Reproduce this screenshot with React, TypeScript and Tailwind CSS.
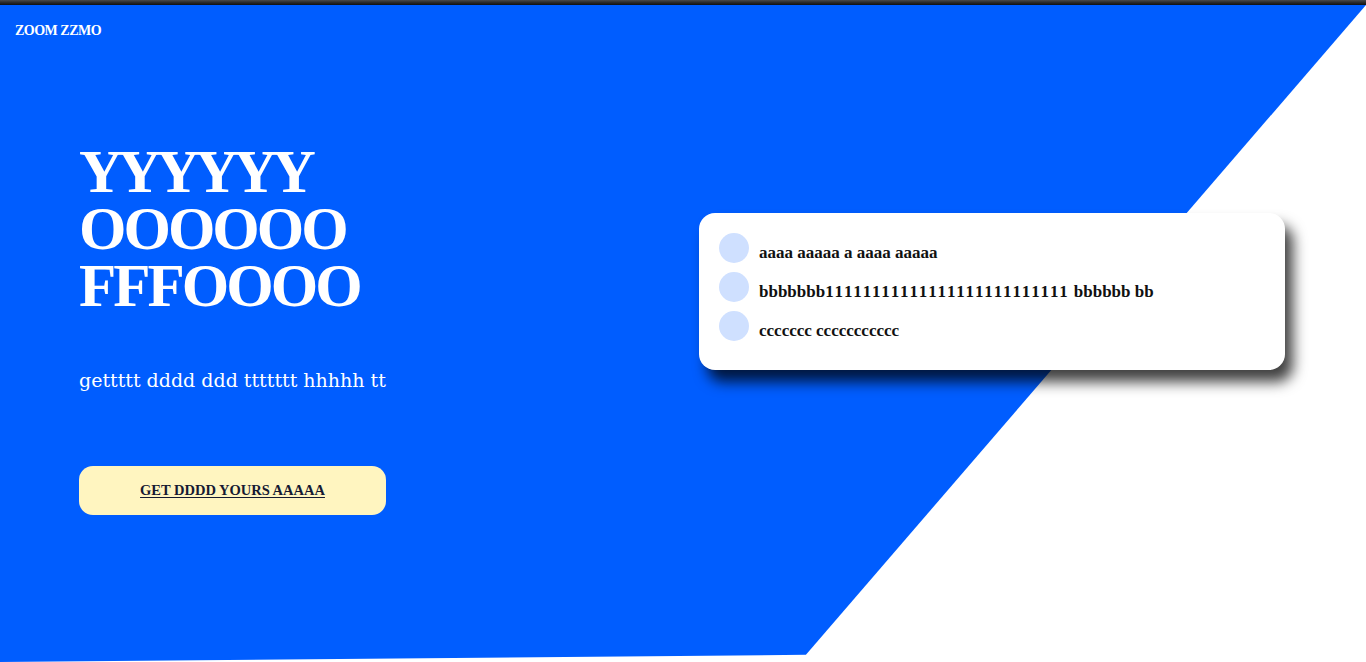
import React from 'react';

const App = () => {
  return (
    <div className="h-[662px] overflow-hidden bg-white font-['Liberation_Serif',serif]">
      {/* top strip */}
      <div className="h-[5px] bg-gradient-to-b from-[#4a4a4a] via-[#2a2a2a] to-[#111111]" />

      <section className="relative h-[657px]">
        {/* slanted blue backdrop */}
        <div className="absolute inset-0 bg-[#005dff] [clip-path:polygon(0_0,100%_0,59%_98.9%,0_100%)]" />

        <div className="relative">
          <header className="pt-[16px] pl-[15px] text-[14px] leading-5 font-bold tracking-[-0.5px] text-white">
            ZOOM ZZMO
          </header>

          <div className="mt-[102px] flex items-start justify-between">
            <div className="pl-[79px]">
              <h1 className="text-[61px] leading-[57px] font-bold tracking-[-3px] text-white">
                <span className="block tracking-[-5.5px]">YYYYYY</span>
                <span className="block">OOOOOO</span>
                <span className="block">FFFOOOO</span>
              </h1>
              <p className="mt-[52px] font-['DejaVu_Serif',serif] text-[19px] leading-[28px] text-white">
                gettttt dddd ddd ttttttt hhhhh tt
              </p>
              <button className="mt-[72px] flex h-[49px] w-[307px] items-center justify-center rounded-[14px] bg-[#fff5c0] text-[14.5px] font-bold text-[#161a33] underline underline-offset-2">
                GET DDDD YOURS AAAAA
              </button>
            </div>

            <div className="mt-[70px] mr-[81px] h-[157px] w-[586px] rounded-2xl bg-white pt-5 pl-5 shadow-[8px_12px_14px_rgba(0,0,0,0.75)]">
              <ul className="flex flex-col gap-[9px] text-[17px] leading-5 font-bold text-[#111111]">
                <li className="flex items-center gap-[10px]">
                  <span className="h-[30px] w-[30px] shrink-0 rounded-full bg-[#cfe0ff]" />
                  <span className="pt-[9px]">aaaa aaaaa a aaaa aaaaa</span>
                </li>
                <li className="flex items-center gap-[10px]">
                  <span className="h-[30px] w-[30px] shrink-0 rounded-full bg-[#cfe0ff]" />
                  <span className="pt-[9px]">
                    bbbbbbb<span className="tracking-[1.8px]">11111111111111111111111111</span> bbbbbb bb
                  </span>
                </li>
                <li className="flex items-center gap-[10px]">
                  <span className="h-[30px] w-[30px] shrink-0 rounded-full bg-[#cfe0ff]" />
                  <span className="pt-[9px]">ccccccc ccccccccccc</span>
                </li>
              </ul>
            </div>
          </div>
        </div>
      </section>
    </div>
  );
};

export default App;
